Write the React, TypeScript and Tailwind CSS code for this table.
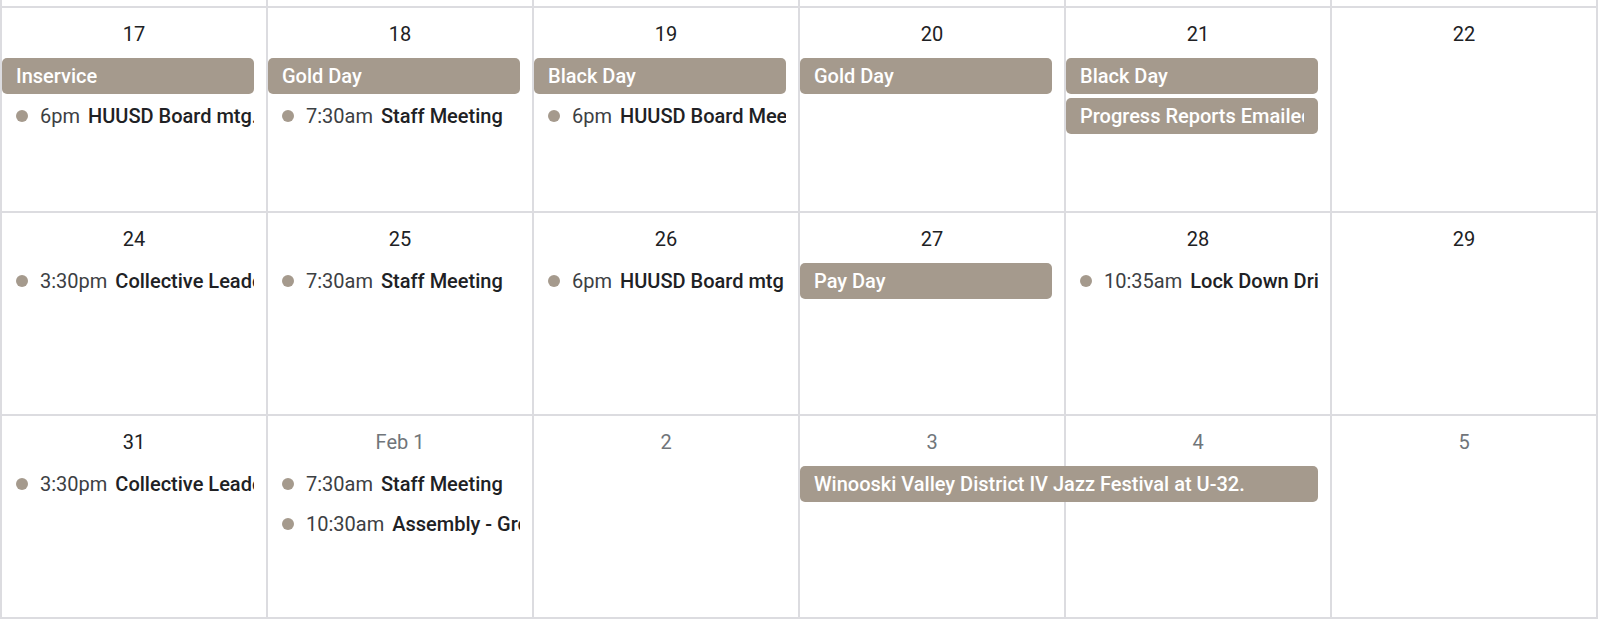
type Ev =
  | { kind: "bar"; col: number; span?: number; row: number; title: string }
  | { kind: "dot"; col: number; row: number; time: string; title: string };

type Week = {
  height: string;
  days: { label: string; other?: boolean }[];
  events: Ev[];
};

const colStart = ["", "col-start-1", "col-start-2", "col-start-3", "col-start-4", "col-start-5", "col-start-6"];
const rowStart = ["", "row-start-1", "row-start-2", "row-start-3", "row-start-4"];

const weeks: Week[] = [
  {
    height: "h-[205px]",
    days: [{ label: "17" }, { label: "18" }, { label: "19" }, { label: "20" }, { label: "21" }, { label: "22" }],
    events: [
      { kind: "bar", col: 1, row: 2, title: "Inservice" },
      { kind: "dot", col: 1, row: 3, time: "6pm", title: "HUUSD Board mtg." },
      { kind: "bar", col: 2, row: 2, title: "Gold Day" },
      { kind: "dot", col: 2, row: 3, time: "7:30am", title: "Staff Meeting" },
      { kind: "bar", col: 3, row: 2, title: "Black Day" },
      { kind: "dot", col: 3, row: 3, time: "6pm", title: "HUUSD Board Meeting" },
      { kind: "bar", col: 4, row: 2, title: "Gold Day" },
      { kind: "bar", col: 5, row: 2, title: "Black Day" },
      { kind: "bar", col: 5, row: 3, title: "Progress Reports Emailed" },
    ],
  },
  {
    height: "h-[203px]",
    days: [{ label: "24" }, { label: "25" }, { label: "26" }, { label: "27" }, { label: "28" }, { label: "29" }],
    events: [
      { kind: "dot", col: 1, row: 2, time: "3:30pm", title: "Collective Leadership" },
      { kind: "dot", col: 2, row: 2, time: "7:30am", title: "Staff Meeting" },
      { kind: "dot", col: 3, row: 2, time: "6pm", title: "HUUSD Board mtg" },
      { kind: "bar", col: 4, row: 2, title: "Pay Day" },
      { kind: "dot", col: 5, row: 2, time: "10:35am", title: "Lock Down Drill" },
    ],
  },
  {
    height: "h-[203px]",
    days: [
      { label: "31" },
      { label: "Feb 1", other: true },
      { label: "2", other: true },
      { label: "3", other: true },
      { label: "4", other: true },
      { label: "5", other: true },
    ],
    events: [
      { kind: "dot", col: 1, row: 2, time: "3:30pm", title: "Collective Leadership" },
      { kind: "dot", col: 2, row: 2, time: "7:30am", title: "Staff Meeting" },
      { kind: "dot", col: 2, row: 3, time: "10:30am", title: "Assembly - Group" },
      { kind: "bar", col: 4, span: 2, row: 2, title: "Winooski Valley District IV Jazz Festival at U-32." },
    ],
  },
];

function EventItem({ ev }: { ev: Ev }) {
  const place = `${colStart[ev.col]} ${rowStart[ev.row]}`;
  if (ev.kind === "bar") {
    return (
      <div
        className={`${place} ${ev.span === 2 ? "col-span-2" : ""} z-10 ml-0.5 mr-3 flex h-9 items-center rounded-[5px] bg-[#a59a8d] px-3.5 text-white`}
      >
        <div className="overflow-hidden whitespace-nowrap font-medium">{ev.title}</div>
      </div>
    );
  }
  return (
    <div className={`${place} z-10 ml-0.5 mr-3 flex h-9 items-center overflow-hidden whitespace-nowrap pl-3.5`}>
      <span className="mr-3 h-3 w-3 shrink-0 rounded-full bg-[#a59a8d]" />
      <span className="mr-2 text-[#3c4043]">{ev.time}</span>
      <span className="font-medium text-[#202124]">{ev.title}</span>
    </div>
  );
}

export default function App() {
  return (
    <div className="w-[1598px] bg-white font-['Roboto','Liberation_Sans',sans-serif] text-[20px]">
      {/* tail of the previous week */}
      <div className="grid h-2 grid-cols-6 border-r-2 border-[#dcdce0]">
        {[0, 1, 2, 3, 4, 5].map((i) => (
          <div key={i} className="border-b-2 border-l-2 border-[#dcdce0]" />
        ))}
      </div>

      {weeks.map((week, w) => (
        <div
          key={w}
          className={`grid ${week.height} grid-cols-6 grid-rows-[50px_40px_40px_1fr] border-r-2 border-[#dcdce0]`}
        >
          {week.days.map((d, i) => (
            <div
              key={d.label}
              className={`${colStart[i + 1]} row-span-4 row-start-1 border-b-2 border-l-2 border-[#dcdce0] pt-3 text-center leading-7 ${
                d.other ? "text-[#70757a]" : "text-[#202124]"
              }`}
            >
              {d.label}
            </div>
          ))}
          {week.events.map((ev, i) => (
            <EventItem key={i} ev={ev} />
          ))}
        </div>
      ))}
    </div>
  );
}
